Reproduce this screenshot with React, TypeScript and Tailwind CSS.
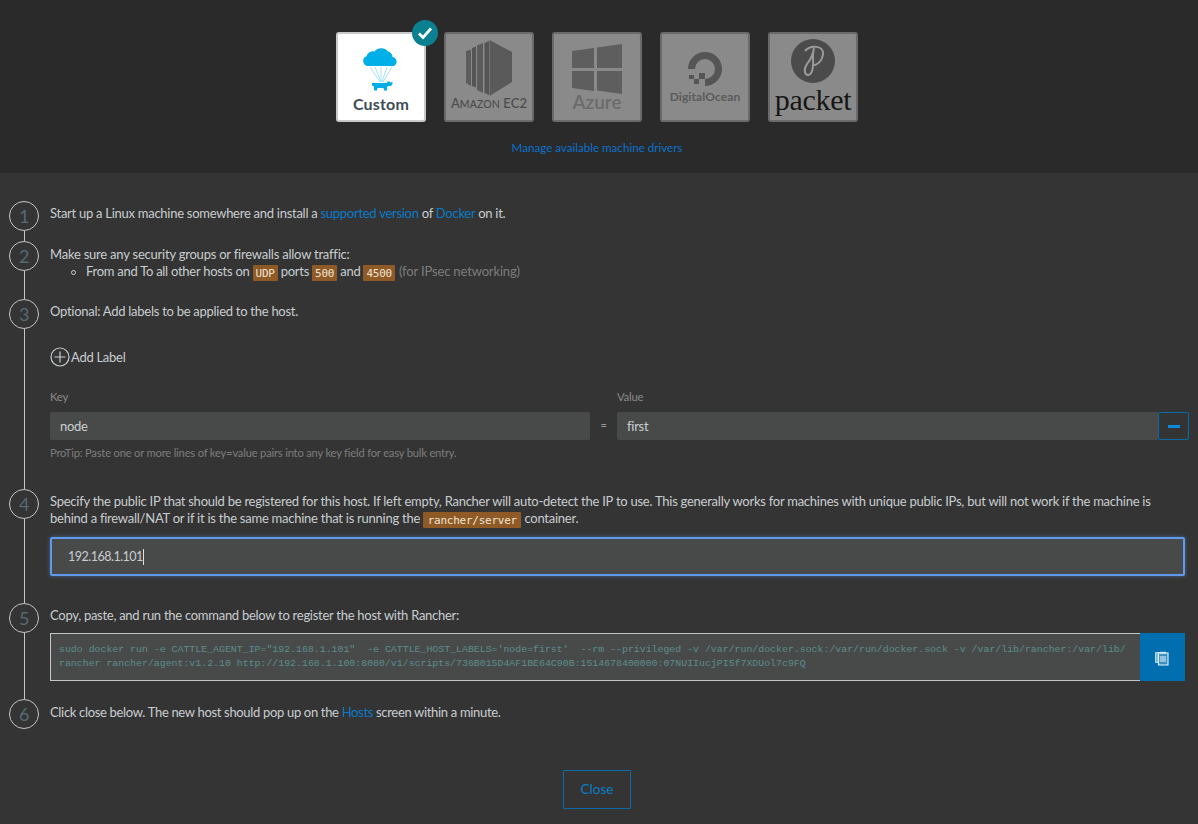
import React from "react";

const Code = ({ children, wide }: { children: React.ReactNode; wide?: boolean }) => (
  <code
    className={`rounded-[1px] bg-[#8f5a26] py-[1.5px] font-['DejaVu_Sans_Mono',monospace] text-[11px] text-[#f0e6d8] ${
      wide ? "px-[4.500px]" : "px-[3px]"
    }`}
  >
    {children}
  </code>
);

const A = ({ children }: { children: React.ReactNode }) => <a className="text-[#0a7bc8]">{children}</a>;

function Step({ n, last, height, children }: { n: number; last?: boolean; height: string; children: React.ReactNode }) {
  return (
    <div className={`flex ${height}`}>
      <div className="flex w-[41px] shrink-0 flex-col items-start">
        <div className="flex h-[30px] w-[30px] shrink-0 items-center justify-center rounded-full border border-[#c4c4c4] text-[18px] leading-none text-[#566a72]">
          {n}
        </div>
        {!last && <div className="ml-[15px] w-px flex-1 bg-[#c4c4c4]" />}
      </div>
      <div className="min-w-0 flex-1 pt-[4px]">{children}</div>
    </div>
  );
}

function Card({ selected, pad, children }: { selected?: boolean; pad: string; children: React.ReactNode }) {
  return (
    <div
      className={`relative flex h-[90px] w-[90px] flex-col items-center justify-start rounded-[3px] border-2 ${pad} ${
        selected ? "border-[#c9c9c9] bg-white" : "border-[#6a6a6a] bg-[#8a8a8a]"
      }`}
    >
      {children}
    </div>
  );
}

export default function App() {
  return (
    <div className="h-[824px] w-[1198px] overflow-hidden bg-[#343434] font-['Lato',sans-serif] text-[13px] leading-[17px] tracking-[-0.27px] text-[#c8cdd0]">
      <div className="flex h-[173px] flex-col items-center bg-[#2a2a2a] pr-[4px] pt-[32px] tracking-normal">
        <div className="flex gap-[18px]">
          <Card selected pad="pt-[13px]">
            <div className="absolute left-[74px] top-[-14px] flex h-[26px] w-[26px] items-center justify-center rounded-full bg-[#0a8090]">
              <svg width="16" height="14" viewBox="0 0 16 14">
                <path d="M2 7.500l4 4 8-9" stroke="#fff" strokeWidth="2.800" fill="none" />
              </svg>
            </div>
            <svg width="36" height="45" viewBox="0 0 36 45">
              <path d="M5 19a5 5 0 0 1-1.500-9.700A6.500 6.500 0 0 1 11.500 4.500 8.500 8.500 0 0 1 25 4.500a6 6 0 0 1 4.500 5.500A4.800 4.800 0 0 1 31 19Z" fill="#00aee8" />
              <path d="M7 20l10 15M12 20l6 15M18 20v15M24 20l-5 15M29 20L20 35" stroke="#8adcf5" strokeWidth=".8" fill="none" />
              <path d="M9 36h15l.5-1.500h2l1 1 2-.5v2l-1.500 2h-3l-1 1v3.500h-3l-.5-2.500h-6l-.5 2.500h-3v-4l-2-1Z" fill="#00aee8" />
            </svg>
            <span className="mt-[2px] text-[16px] font-bold leading-[20px] tracking-[0.2px] text-[#3d4b55]">Custom</span>
          </Card>
          <Card pad="pt-[6px]">
            <svg width="48" height="56" viewBox="0 0 48 56">
              <path d="M1 11l5-1.500V46L1 43Z" fill="#5c5c5c" />
              <path d="M7 8l4-1.500v41L7 46Z" fill="#555" />
              <path d="M12 5.500l6-2.500v50l-6-3Z" fill="#5c5c5c" />
              <path d="M19.500 3l4.500-2v54l-4.500-2Z" fill="#555" />
              <path d="M24.500 0L47 12v30L24.500 56Z" fill="#5a5a5a" />
            </svg>
            <span className="whitespace-nowrap text-[13px] font-medium leading-[14px] tracking-[0.1px] text-[#4a4a4a]">
              <span>A</span>
              <span className="text-[10.5px]">MAZON</span> EC2
            </span>
          </Card>
          <Card pad="pt-[10px]">
            <svg width="50" height="50" viewBox="0 0 50 50">
              <path d="M0 7l22-3v20H0ZM25 3.500L50 0v24H25ZM0 27h22v20L0 44ZM25 27h25v23l-25-3.500Z" fill="#5e5e5e" />
            </svg>
            <span className="-mt-[4px] text-[19px] font-semibold leading-[24px] text-[#6b6b6b]">Azure</span>
          </Card>
          <Card pad="pt-[17px]">
            <svg width="36" height="36" viewBox="687 51 36 36">
              <path d="M705 86A17 17 0 1 0 688 69H695A10 10 0 1 1 705 79Z" fill="#555" />
              <path d="M699 73h6v6h-6ZM694 79h5v5h-5ZM689 75h5v4h-5Z" fill="#555" />
            </svg>
            <span className="mt-[3px] text-[12px] font-bold leading-[14px] tracking-[0.1px] text-[#5a5a5a]">DigitalOcean</span>
          </Card>
          <Card pad="pt-[5px]">
            <svg width="44" height="44" viewBox="0 0 44 44">
              <circle cx="22" cy="22" r="22" fill="#4b4b4b" />
              <path d="M14 12C19 6 33 6 32 15 31 23 25 27 21 26M23 9C22 16 20 20 16 25 12 31 14 36 17 36 21 36 23 28 22 20 22 16 22 12 23 9" stroke="#9a9a9a" strokeWidth="2" fill="none" />
            </svg>
            <span className="mt-[2px] font-['Liberation_Serif',serif] text-[30px] leading-[30px] tracking-[-0.3px] text-[#161616]">packet</span>
          </Card>
        </div>
        <a className="mt-[18px] text-[11.6px] leading-[16px] text-[#0a72cc]">Manage available machine drivers</a>
      </div>

      <div className="pl-[9px] pr-[13px] pt-[28px]">
        <Step n={1} height="h-[40px]">
          Start up a Linux machine somewhere and install a <A>supported version</A> of <A>Docker</A> on it.
        </Step>
        <Step n={2} height="h-[58px]">
          <div className="pt-[1px] tracking-[-0.22px]">Make sure any security groups or firewalls allow traffic:</div>
          <div className="flex items-center">
            <span className="ml-[21px] mr-[10px] h-[5px] w-[5px] rounded-full border border-[#c8cdd0]" />
            <span>
              From and To all other hosts on <Code>UDP</Code> ports <Code>500</Code> and <Code>4500</Code>{" "}
              <span className="ml-[1px] tracking-[-0.15px] text-[#7d7d7d]">(for IPsec networking)</span>
            </span>
          </div>
        </Step>
        <Step n={3} height="h-[190px]">
          <div>Optional: Add labels to be applied to the host.</div>
          <div className="mt-[27px] flex items-center">
            <svg width="20" height="20" viewBox="0 0 20 20" className="mr-[1px]">
              <circle cx="10" cy="10" r="9" stroke="#c8cdd0" strokeWidth="1.200" fill="none" />
              <path d="M10 4.500v11M4.500 10h11" stroke="#c8cdd0" strokeWidth="1.200" />
            </svg>
            Add Label
          </div>
          <div className="mt-[21px] flex">
            <div className="w-[540px]">
              <div className="text-[11.4px] text-[#8a8a8a]">Key</div>
              <div className="mt-[7px] flex h-[28px] items-center rounded-[2px] bg-[#484a4a] pl-[10px] text-[#c8cdd0]">node</div>
            </div>
            <div className="flex w-[27px] justify-center pt-[28px] text-[11px] text-[#9a9a9a]">=</div>
            <div className="flex-1">
              <div className="text-[11.4px] text-[#8a8a8a]">Value</div>
              <div className="mt-[7px] flex h-[28px] items-center">
                <div className="flex h-full flex-1 items-center rounded-l-[2px] bg-[#484a4a] pl-[10px]">first</div>
                <div className="-mr-[4px] flex h-full w-[31px] items-center justify-center rounded-[2px] border border-[#0a6ba8]">
                  <div className="h-[3px] w-[12px] bg-[#0a8ad8]" />
                </div>
              </div>
            </div>
          </div>
          <div className="mt-[4px] text-[11.2px] tracking-[-0.2px] text-[#7d7d7d]">ProTip: Paste one or more lines of key=value pairs into any key field for easy bulk entry.</div>
        </Step>
        <Step n={4} height="h-[114px]">
          <div className="tracking-[-0.25px]">
            Specify the public IP that should be registered for this host. If left empty, Rancher will auto-detect the IP to use. This generally works for machines with unique public IPs, but will not work if the machine is behind a firewall/NAT or if it is the same machine that is running the <Code wide>rancher/server</Code> container.
          </div>
          <div className="mt-[9px] flex h-[39px] items-center rounded-[2px] border-2 border-[#5f9bea] bg-[#484a4a] pl-[16px] text-[12.5px] tracking-[-0.5px] shadow-[0_0_4px_#5f9bea80]">
            192.168.1.101<span className="ml-[0.5px] h-[16px] w-px bg-[#e0e0e0]" />
          </div>
        </Step>
        <Step n={5} height="h-[96px]">
          <div>Copy, paste, and run the command below to register the host with Rancher:</div>
          <div className="mt-[9px] flex h-[48px]">
            <div className="flex-1 whitespace-pre border border-r-0 border-[#c4c4c4] bg-[#484a4a] pb-[7px] pl-[8px] pr-[8px] pt-[9px] font-['Liberation_Mono',monospace] text-[9.89px] leading-[14px] tracking-normal text-[#5c8d8a]">
              {`sudo docker run -e CATTLE_AGENT_IP="192.168.1.101"  -e CATTLE_HOST_LABELS='node=first'  --rm --privileged -v /var/run/docker.sock:/var/run/docker.sock -v /var/lib/rancher:/var/lib/\nrancher rancher/agent:v1.2.10 http://192.168.1.100:8080/v1/scripts/736B015D4AF1BE64C90B:1514678400000:07NUIIucjPI5f7XDUol7c9FQ`}
            </div>
            <div className="flex w-[45px] items-center justify-center bg-[#006eaf]">
              <svg width="15" height="15" viewBox="0 0 15 15" className="mt-[2px]">
                <path d="M.5 1.500h7v10h-7Z" fill="#7db8da" stroke="#cfe8f6" strokeWidth=".8" />
                <path d="M3.500 2h9.500v12H3.500Z" fill="#3d8fc0" stroke="#e6f3fb" strokeWidth="1.100" />
                <path d="M5 .8h6v2H5Z" fill="#cfe8f6" />
                <path d="M5 5h6v6H5Z" fill="#8fc3e0" />
              </svg>
            </div>
          </div>
        </Step>
        <Step n={6} last height="h-[30px]">
          <div className="pt-[1px] tracking-[-0.325px]">Click close below. The new host should pop up on the <A>Hosts</A> screen within a minute.</div>
        </Step>
      </div>

      <div className="mt-[41px] flex justify-center pr-[4px]">
        <button className="h-[39px] w-[68px] rounded-[1px] border border-[#0a6ba8] text-[13.5px] tracking-normal text-[#0a7fc8]">Close</button>
      </div>
    </div>
  );
}
